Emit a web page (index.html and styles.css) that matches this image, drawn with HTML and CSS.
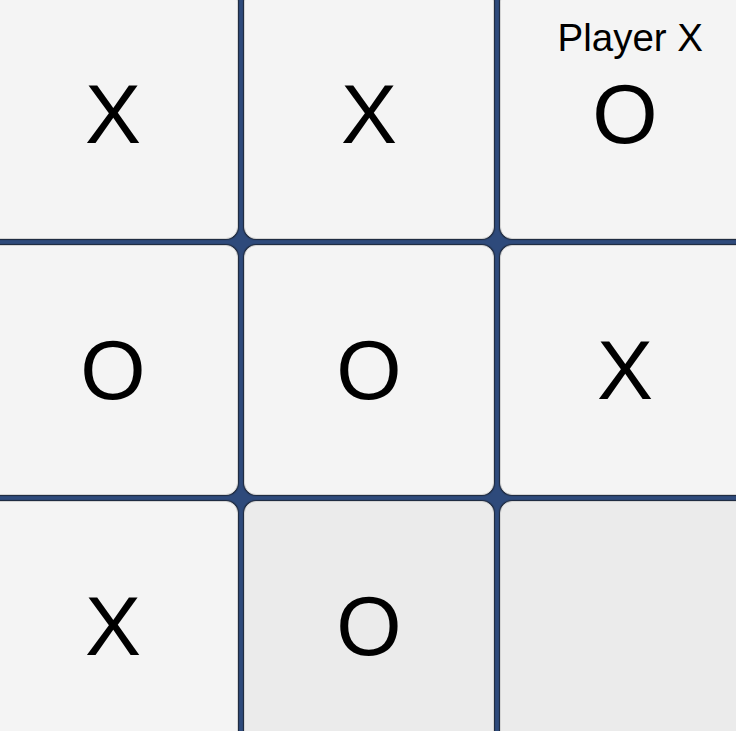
FILE: index.html
```html
<!DOCTYPE html>
<html lang="en">
<head>
    <meta charset="UTF-8">
    <meta name="viewport" content="width=device-width, initial-scale=1.0">
    <title>Tic Tac Toe</title>
    <link rel="stylesheet" href="styles.css">
</head>
<body>
    <div class="board">
        <div class="cell">X</div>
        <div class="cell">X</div>
        <div class="cell">O</div>
        <div class="cell">O</div>
        <div class="cell">O</div>
        <div class="cell">X</div>
        <div class="cell">X</div>
        <div class="cell pressed">O</div>
        <div class="cell pressed"></div>
    </div>
    <div class="status">Player X</div>
</body>
</html>
```

FILE: styles.css
```css
html, body {
    margin: 0;
    padding: 0;
    overflow: hidden;
}
body {
    position: relative;
    width: 736px;
    height: 731px;
    background-color: #2e4a7b;
    font-family: "Liberation Sans", Arial, sans-serif;
    color: #000;
}
.board {
    display: grid;
    grid-template-columns: repeat(3, 250px);
    grid-template-rows: repeat(3, 250px);
    gap: 6px;
    margin: -11px 0 0 -12px;
}
.cell {
    display: flex;
    align-items: center;
    justify-content: center;
    background-color: #f4f4f4;
    border: 1px solid #d4d4d4;
    border-radius: 12px;
    box-shadow: 0 0 1px 1px rgba(20, 20, 20, 0.6);
    box-sizing: border-box;
    font-size: 84px;
}
.cell.pressed {
    background-color: #ebebeb;
}
.status {
    position: absolute;
    top: 16px;
    right: 33px;
    font-size: 38.5px;
}
```
